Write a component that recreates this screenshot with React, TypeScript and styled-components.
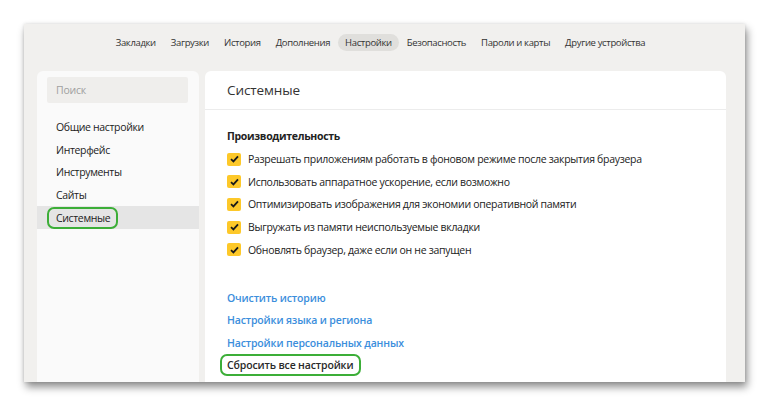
import React from 'react';
import styled, { createGlobalStyle } from 'styled-components';

const GlobalStyle = createGlobalStyle`
  html, body {
    margin: 0;
    padding: 0;
    background: #ffffff;
    font-family: 'Open Sans', 'Noto Sans', sans-serif;
    color: #333;
  }
`;

const navItems = [
  'Закладки',
  'Загрузки',
  'История',
  'Дополнения',
  'Настройки',
  'Безопасность',
  'Пароли и карты',
  'Другие устройства',
];

const sideItems = ['Общие настройки', 'Интерфейс', 'Инструменты', 'Сайты', 'Системные'];

const options = [
  'Разрешать приложениям работать в фоновом режиме после закрытия браузера',
  'Использовать аппаратное ускорение, если возможно',
  'Оптимизировать изображения для экономии оперативной памяти',
  'Выгружать из памяти неиспользуемые вкладки',
  'Обновлять браузер, даже если он не запущен',
];

const links = ['Очистить историю', 'Настройки языка и региона', 'Настройки персональных данных'];

const CheckIcon = () => (
  <svg width='9' height='8' viewBox='0 0 9 8'>
    <path d='M1 4.2 L3.4 6.4 L8 1.4' fill='none' stroke='#1a1a1a' strokeWidth='1.8' />
  </svg>
);

const App = () => {
  return (
    <>
      <GlobalStyle />
      <Page>
        <Window>
          <Nav>
            {navItems.map((item) => (
              <NavItem key={item} $active={item === 'Настройки'}>
                {item}
              </NavItem>
            ))}
          </Nav>
          <Body>
            <Sidebar>
              <Search>Поиск</Search>
              <Menu>
                {sideItems.map((item) => (
                  <MenuItem key={item} $active={item === 'Системные'}>
                    {item === 'Системные' ? <Highlight>{item}</Highlight> : item}
                  </MenuItem>
                ))}
              </Menu>
            </Sidebar>
            <Main>
              <Header>Системные</Header>
              <Content>
                <SectionTitle>Производительность</SectionTitle>
                <Options>
                  {options.map((text) => (
                    <Option key={text}>
                      <Checkbox>
                        <CheckIcon />
                      </Checkbox>
                      {text}
                    </Option>
                  ))}
                </Options>
                <Links>
                  {links.map((text) => (
                    <LinkItem key={text}>{text}</LinkItem>
                  ))}
                  <ResetLink>
                    <Highlight $dark>Сбросить все настройки</Highlight>
                  </ResetLink>
                </Links>
              </Content>
            </Main>
          </Body>
        </Window>
      </Page>
    </>
  );
};

const Page = styled.div`
  width: 768px;
  height: 406px;
  padding: 24px 0 0 24px;
  box-sizing: border-box;
  overflow: hidden;
`;

const Window = styled.div`
  width: 721px;
  height: 358px;
  background: #f1f0ee;
  box-shadow: 2px 5px 8px rgba(0, 0, 0, 0.45), 0 0 3px rgba(0, 0, 0, 0.12);
  display: flex;
  flex-direction: column;
  overflow: hidden;
`;

const Nav = styled.div`
  display: flex;
  justify-content: center;
  gap: 1px;
  padding: 10px 8px 0 0;
  height: 17px;
  box-sizing: content-box;
`;

const NavItem = styled.div<{ $active?: boolean }>`
  height: 17px;
  line-height: 17px;
  padding: 0 7px;
  border-radius: 9px;
  font-size: 9.5px;
  letter-spacing: -0.35px;
  color: #333;
  background: ${({ $active }) => ($active ? '#e0dfdc' : 'transparent')};
`;

const Body = styled.div`
  flex: 1;
  display: flex;
  gap: 6px;
  padding: 20px 19px 0 13px;
  min-height: 0;
`;

const Sidebar = styled.div`
  width: 162px;
  flex-shrink: 0;
  background: #fafafa;
  border-radius: 6px 6px 0 0;
  padding-top: 6px;
  box-sizing: border-box;
`;

const Search = styled.div`
  margin: 0 11px 0 10px;
  height: 26px;
  line-height: 26px;
  padding-left: 9px;
  background: #efeeec;
  border-radius: 2px;
  font-size: 10.5px;
  letter-spacing: -0.2px;
  color: #a0a0a0;
`;

const Menu = styled.div`
  display: flex;
  flex-direction: column;
  margin-top: 13px;
`;

const MenuItem = styled.div<{ $active?: boolean }>`
  height: 22.6px;
  display: flex;
  align-items: center;
  padding-left: 19px;
  font-size: 10.5px;
  letter-spacing: -0.35px;
  color: #222;
  background: ${({ $active }) => ($active ? '#e5e5e5' : 'transparent')};
`;

const Highlight = styled.span<{ $dark?: boolean }>`
  display: inline-block;
  margin-left: ${({ $dark }) => ($dark ? '-7px' : '-9px')};
  padding: 0 6px 0 ${({ $dark }) => ($dark ? '5px' : '7px')};
  height: 18px;
  line-height: 18px;
  border: 2px solid #3cae38;
  border-radius: 7px;
  color: ${({ $dark }) => ($dark ? '#2a2a2a' : '#222')};
`;

const Main = styled.div`
  flex: 1;
  background: #ffffff;
  border-radius: 6px 6px 0 0;
  display: flex;
  flex-direction: column;
`;

const Header = styled.div`
  height: 38px;
  line-height: 38px;
  padding-left: 22px;
  font-size: 13.5px;
  letter-spacing: -0.1px;
  color: #333;
  border-bottom: 1px solid #ececec;
`;

const Content = styled.div`
  padding: 17px 0 0 22px;
`;

const SectionTitle = styled.div`
  font-size: 10.5px;
  font-weight: 700;
  letter-spacing: -0.3px;
  color: #222;
  height: 18px;
  line-height: 18px;
`;

const Options = styled.div`
  display: flex;
  flex-direction: column;
  margin-top: 3px;
`;

const Option = styled.div`
  height: 22.6px;
  display: flex;
  align-items: center;
  gap: 7px;
  font-size: 10.5px;
  letter-spacing: -0.3px;
  color: #222;
`;

const Checkbox = styled.div`
  width: 14px;
  height: 13px;
  border-radius: 2px;
  background: #fdc829;
  display: flex;
  align-items: center;
  justify-content: center;
  flex-shrink: 0;
`;

const Links = styled.div`
  display: flex;
  flex-direction: column;
  margin-top: 26px;
`;

const LinkItem = styled.div`
  height: 22.4px;
  line-height: 22.4px;
  font-size: 10.5px;
  font-weight: 600;
  letter-spacing: -0.15px;
  color: #3b8edc;
`;

const ResetLink = styled.div`
  margin-top: 0;
  font-size: 10.5px;
  font-weight: 600;
  letter-spacing: -0.15px;
`;

export default App;
